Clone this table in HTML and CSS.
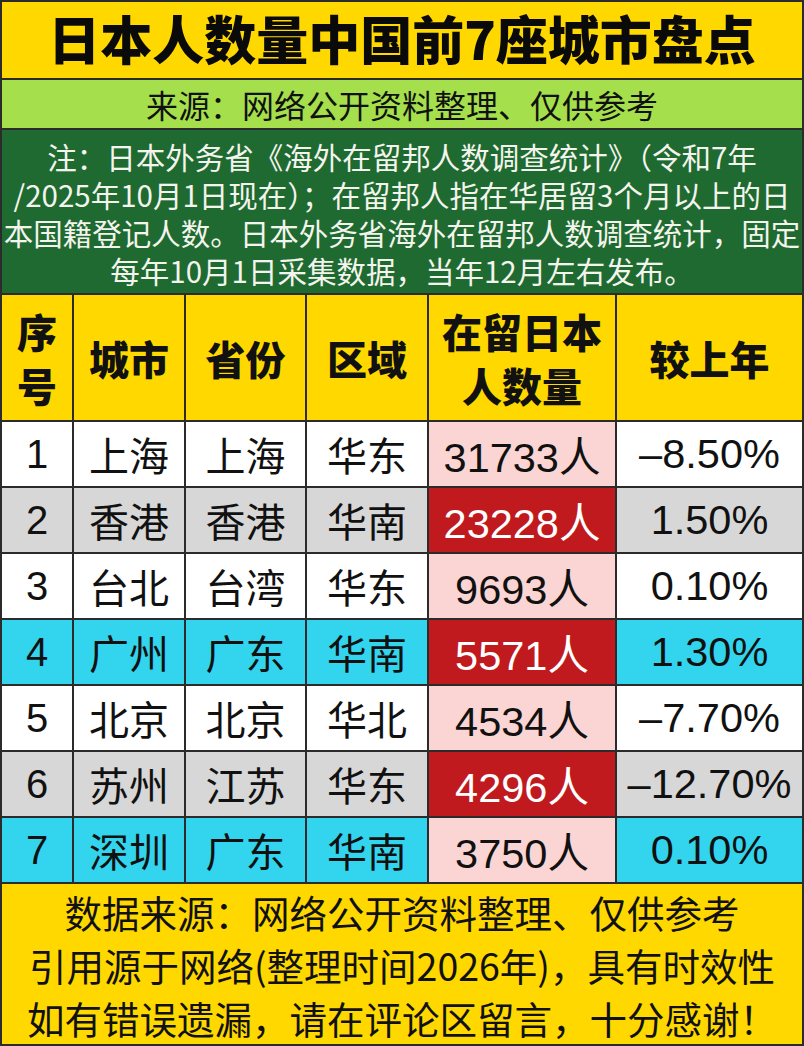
FILE: index.html
```html
<!DOCTYPE html>
<html lang="zh-CN">
<head>
<meta charset="utf-8">
<title>日本人数量中国前7座城市盘点</title>
<link rel="stylesheet" href="styles.css">
</head>
<body>
<div class="page">
  <div class="title">日本人数量中国前7座城市盘点</div>
  <div class="source">来源：网络公开资料整理、仅供参考</div>
  <div class="note">
    <span class="line">注：日本外务省《海外在留邦人数调查统计》（令和7年</span>
    <span class="line">/2025年10月1日现在）；在留邦人指在华居留3个月以上的日</span>
    <span class="line">本国籍登记人数。日本外务省海外在留邦人数调查统计，固定</span>
    <span class="line">每年10月1日采集数据，当年12月左右发布。</span>
  </div>
  <div class="table">
    <div class="cell head">序<br>号</div>
    <div class="cell head">城市</div>
    <div class="cell head">省份</div>
    <div class="cell head">区域</div>
    <div class="cell head">在留日本<br>人数量</div>
    <div class="cell head">较上年</div>

    <div class="cell white">1</div><div class="cell white">上海</div><div class="cell white">上海</div><div class="cell white">华东</div><div class="cell num pink">31733人</div><div class="cell num white">–8.50%</div>
    <div class="cell gray">2</div><div class="cell gray">香港</div><div class="cell gray">香港</div><div class="cell gray">华南</div><div class="cell num red">23228人</div><div class="cell num gray">1.50%</div>
    <div class="cell white">3</div><div class="cell white">台北</div><div class="cell white">台湾</div><div class="cell white">华东</div><div class="cell num pink">9693人</div><div class="cell num white">0.10%</div>
    <div class="cell cyan">4</div><div class="cell cyan">广州</div><div class="cell cyan">广东</div><div class="cell cyan">华南</div><div class="cell num red">5571人</div><div class="cell num cyan">1.30%</div>
    <div class="cell white">5</div><div class="cell white">北京</div><div class="cell white">北京</div><div class="cell white">华北</div><div class="cell num pink">4534人</div><div class="cell num white">–7.70%</div>
    <div class="cell gray">6</div><div class="cell gray">苏州</div><div class="cell gray">江苏</div><div class="cell gray">华东</div><div class="cell num red">4296人</div><div class="cell num gray">–12.70%</div>
    <div class="cell cyan">7</div><div class="cell cyan">深圳</div><div class="cell cyan">广东</div><div class="cell cyan">华南</div><div class="cell num pink">3750人</div><div class="cell num cyan">0.10%</div>
  </div>
  <div class="footer">
    <span class="fline">数据来源：网络公开资料整理、仅供参考</span>
    <span class="fline">引用源于网络(整理时间2026年)，具有时效性</span>
    <span class="fline">如有错误遗漏，请在评论区留言，十分感谢！</span>
  </div>
</div>
</body>
</html>
```

FILE: styles.css
```css
* { box-sizing: border-box; margin: 0; padding: 0; }
html, body { background: #2b2b2b; }
body { width: 804px; height: 1046px; overflow: hidden; }

.page {
  width: 804px;
  height: 1046px;
  background: #2b2b2b;
  padding: 2px;
  display: flex;
  flex-direction: column;
  gap: 2px;
  font-family: "Noto Sans CJK SC", "Noto Sans", sans-serif;
  color: #111;
}

.title {
  height: 76px;
  background: #ffd800;
  text-align: center;
  font-size: 52px;
  font-weight: 900;
  line-height: 72px;
  color: #0a0a0a;
}

.source {
  height: 48px;
  background: #a5df4b;
  text-align: center;
  font-size: 32px;
  line-height: 48px;
  color: #111;
}

.note {
  height: 163px;
  background: #1f6a30;
  color: #f4f4ee;
  font-size: 29.5px;
  display: flex;
  flex-direction: column;
  align-items: center;
  justify-content: center;
  padding-top: 2px;
}
.note .line {
  display: block;
  white-space: nowrap;
  line-height: 38px;
  height: 38px;
}

.table {
  display: grid;
  grid-template-columns: 70px 110px 119px 120px 186px 185px;
  grid-template-rows: 125px repeat(7, 64px);
  gap: 2px;
}
.cell {
  display: flex;
  align-items: center;
  justify-content: center;
  text-align: center;
  font-family: "Liberation Sans", "Noto Sans CJK SC", sans-serif;
  font-size: 40px;
  color: #111;
  white-space: nowrap;
}
.cell.num { font-size: 41.5px; }
.cell.head {
  background: #ffd800;
  font-family: "Noto Sans CJK SC", sans-serif;
  font-weight: 900;
  line-height: 54px;
  font-size: 40px;
}
.white { background: #ffffff; }
.gray { background: #d7d7d7; }
.cyan { background: #33d5ee; }
.pink { background: #fad5d3; }
.cell.red { background: #c01a1e; color: #ffffff; }

.footer {
  flex: 1;
  background: #ffd800;
  display: flex;
  flex-direction: column;
  align-items: center;
  justify-content: center;
  font-size: 37.5px;
  color: #111;
}
.footer .fline {
  display: block;
  white-space: nowrap;
  line-height: 53px;
  height: 53px;
}
```
